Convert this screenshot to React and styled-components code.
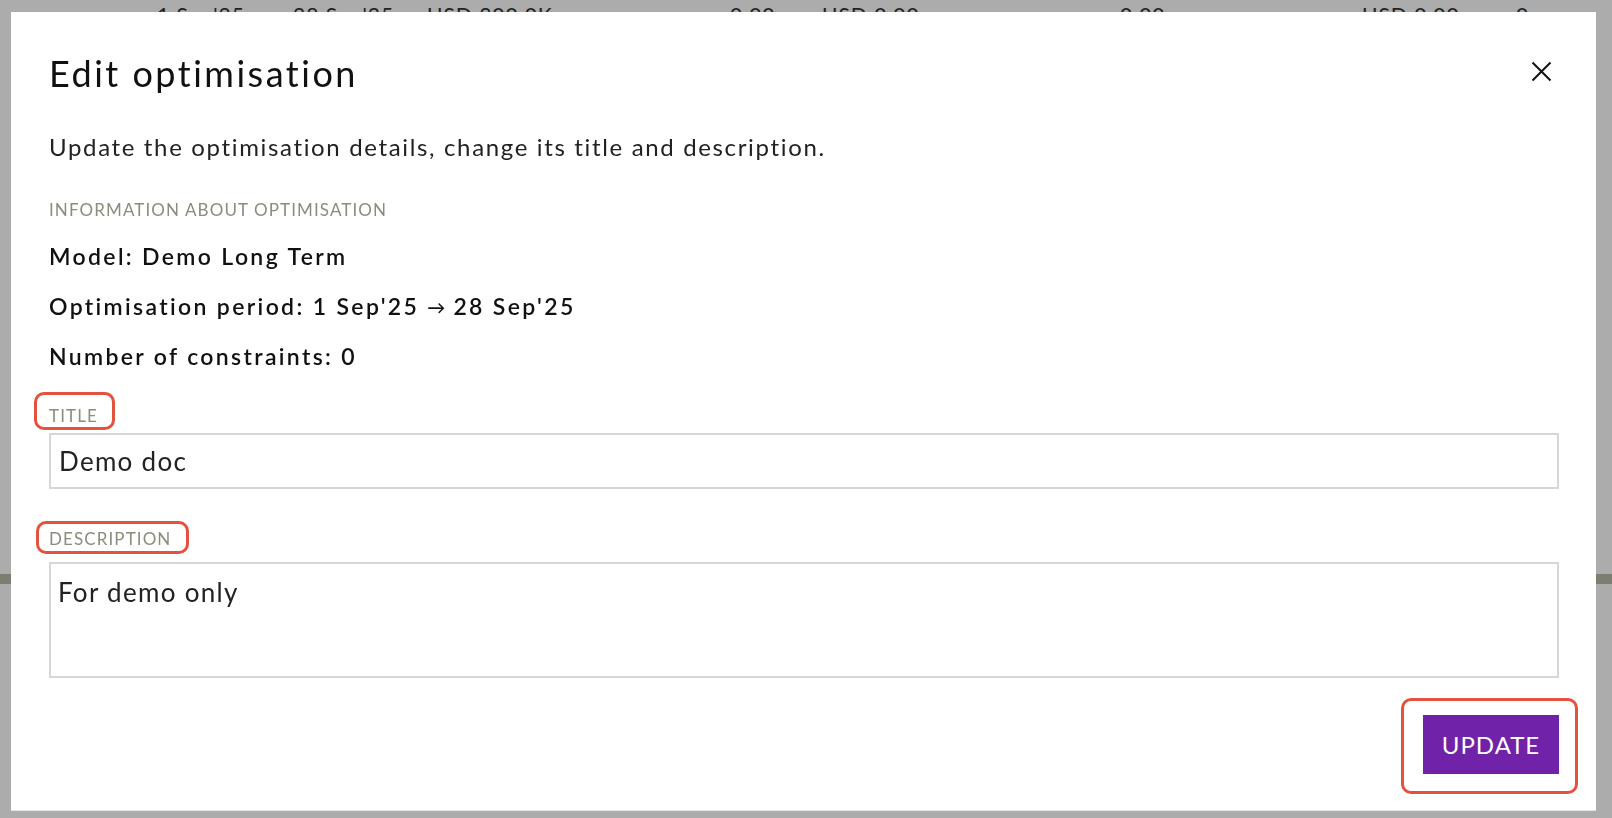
import React from 'react';
import styled, { createGlobalStyle } from 'styled-components';

const backgroundCells = [
  { text: "1 Sep'25", width: 136 },
  { text: "28 Sep'25", width: 134 },
  { text: 'USD 300.0K', width: 303 },
  { text: '0.00', width: 92 },
  { text: 'USD 0.00', width: 298 },
  { text: '0.00', width: 242 },
  { text: 'USD 0.00', width: 154 },
  { text: '0', width: 40 },
];

const App = () => {
  return (
    <>
      <GlobalStyle />
      <BackPage>
        <BackRow>
          {backgroundCells.map((cell, i) => (
            <BackCell key={i} $width={cell.width}>
              {cell.text}
            </BackCell>
          ))}
        </BackRow>
        <BackDivider />
      </BackPage>

      <Overlay>
        <Modal role="dialog" aria-labelledby="edit-title">
          <Header>
            <Title id="edit-title">Edit optimisation</Title>
            <CloseButton aria-label="Close">
              <svg width="21" height="21" viewBox="0 0 21 21">
                <path d="M1.5 1.5 L19.5 19.5 M19.5 1.5 L1.5 19.5" stroke="#111" strokeWidth="2" fill="none" />
              </svg>
            </CloseButton>
          </Header>

          <Intro>Update the optimisation details, change its title and description.</Intro>

          <SectionLabel $gap="38px">Information about optimisation</SectionLabel>
          <InfoLine>Model: Demo Long Term</InfoLine>
          <InfoLine>
            Optimisation period: 1 Sep'25 <Arrow>→</Arrow> 28 Sep'25
          </InfoLine>
          <InfoLine>Number of constraints: 0</InfoLine>

          <SectionLabel $gap="36px" $after="7px">
            <Marked $inset="-14px -17px -4px -15px">Title</Marked>
          </SectionLabel>
          <TextInput defaultValue="Demo doc" />

          <SectionLabel $gap="40px" $after="13px">
            <Marked $inset="-8px -18px -5px -13px">Description</Marked>
          </SectionLabel>
          <TextArea defaultValue="For demo only" />

          <Footer>
            <Marked $inset="-17px -19px -20px -22px">
              <UpdateButton>Update</UpdateButton>
            </Marked>
          </Footer>
        </Modal>
      </Overlay>
    </>
  );
};

// Styled Components
const GlobalStyle = createGlobalStyle`
  html, body {
    margin: 0;
    padding: 0;
    height: 100%;
    overflow: hidden;
  }

  body {
    font-family: Lato, "Open Sans", sans-serif;
    background: #fff;
    color: #111;
  }
`;

const BackPage = styled.div`
  display: flex;
  flex-direction: column;
  height: 100vh;
  background: #fff;
`;

const BackRow = styled.div`
  display: flex;
  padding: 3px 0 0 157px;
  font-size: 21px;
  line-height: 24px;
  letter-spacing: 1px;
  color: #333;
`;

const BackCell = styled.span`
  flex: 0 0 ${(p) => p.$width}px;
  white-space: nowrap;
`;

const BackDivider = styled.div`
  margin-top: 547px;
  height: 10px;
  background: #b9b9aa;
`;

const Overlay = styled.div`
  position: fixed;
  inset: 0;
  display: flex;
  align-items: flex-start;
  padding: 12px 16px 0 11px;
  background: rgba(0, 0, 0, 0.325);
`;

const Modal = styled.div`
  flex: 1;
  display: flex;
  flex-direction: column;
  padding: 41px 37px 36px 38px;
  background: #fff;
  box-shadow: 0 1px 0 #e6e6e6;
`;

const Header = styled.div`
  display: flex;
  align-items: center;
  justify-content: space-between;
`;

const Title = styled.h2`
  margin: 0;
  font-size: 36px;
  font-weight: 400;
  line-height: 40px;
  letter-spacing: 2.5px;
  color: #111;
`;

const CloseButton = styled.button`
  width: 36px;
  height: 36px;
  display: flex;
  align-items: center;
  justify-content: center;
  padding: 0;
  margin-top: -4px;
  border: none;
  background: transparent;
  cursor: pointer;
`;

const Intro = styled.p`
  margin: 39px 0 0;
  font-size: 24px;
  line-height: 30px;
  letter-spacing: 1.65px;
  color: #222;
`;

const SectionLabel = styled.div`
  margin-top: ${(p) => p.$gap};
  margin-bottom: ${(p) => p.$after || '0'};
  font-size: 17px;
  line-height: 20px;
  letter-spacing: 1.1px;
  text-transform: uppercase;
  color: #8b8c7b;
`;

const InfoLine = styled.div`
  height: 28px;
  margin-top: 22px;
  font-size: 23px;
  font-weight: 600;
  line-height: 28px;
  letter-spacing: 2.35px;
  color: #111;
`;

const Arrow = styled.span`
  position: relative;
  top: -1px;
  font-size: 18px;
  line-height: 0;
  letter-spacing: 0;
`;

const Marked = styled.span`
  position: relative;
  display: inline-block;

  &::after {
    content: '';
    position: absolute;
    inset: ${(p) => p.$inset};
    border: 3px solid #e4513d;
    border-radius: 10px;
    pointer-events: none;
  }
`;

const fieldBase = `
  box-sizing: border-box;
  width: 100%;
  margin: 0;
  border: 2px solid #d6d6d6;
  border-radius: 0;
  background: #fff;
  font-family: Lato, "Open Sans", sans-serif;
  font-size: 26px;
  letter-spacing: 1.3px;
  color: #222;
  outline: none;
`;

const TextInput = styled.input`
  ${fieldBase}
  height: 56px;
  padding: 0 8px;
`;

const TextArea = styled.textarea`
  ${fieldBase}
  display: block;
  height: 116px;
  padding: 13px 7px;
  line-height: 30px;
  resize: none;
`;

const Footer = styled.div`
  display: flex;
  justify-content: flex-end;
  margin-top: 37px;
`;

const UpdateButton = styled.button`
  display: block;
  width: 136px;
  height: 59px;
  padding: 0;
  border: none;
  background: #7022a8;
  color: #fff;
  font-family: Lato, "Open Sans", sans-serif;
  font-size: 24px;
  letter-spacing: 1px;
  text-transform: uppercase;
  cursor: pointer;
`;

export default App;
